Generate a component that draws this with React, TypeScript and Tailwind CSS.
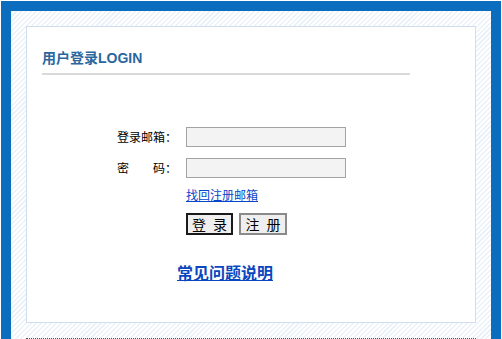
export default function App() {
  const cjk = { fontFamily: '"Noto Sans CJK SC", "Liberation Sans", sans-serif' };
  return (
    <div className="w-[502px] h-[339px] bg-white pt-px px-px overflow-hidden">
      <div className="h-[338px] bg-[#0a6dbd] pt-[10px] px-[10px]">
        <div className="h-[328px] bg-[repeating-linear-gradient(135deg,#ebf2fa_0px,#ebf2fa_1.5px,#ffffff_1.5px,#ffffff_3.5px)] pt-[15px] px-[15px]">
          <div className="h-[297px] bg-white border border-[#d3deec]">
            <div className="ml-[15px] mt-[21px] w-[368px] border-b-2 border-[#d9d9d9] pb-[5px]">
              <div
                className="text-[14px] leading-[20px] font-bold text-[#2a679e]"
                style={{ fontFamily: '"Liberation Sans", "Noto Sans CJK SC", sans-serif' }}
              >
                用户登录LOGIN
              </div>
            </div>

            <div className="ml-[90px] mt-[52px] text-[12px] text-black" style={cjk}>
              <div className="flex items-center h-[20px]">
                <span className="w-[69px] leading-[20px]">登录邮箱：</span>
                <input className="w-[160px] h-[20px] bg-[#f3f3f3] border border-[#a3a3a3] outline-none" />
              </div>
              <div className="flex items-center h-[20px] mt-[11px]">
                <span className="w-[69px] leading-[20px]">密　　码：</span>
                <input type="password" className="w-[160px] h-[20px] bg-[#f3f3f3] border border-[#a3a3a3] outline-none" />
              </div>
              <div className="ml-[69px] mt-[10px] h-[14px] leading-[14px]">
                <a href="#" className="text-[#0645c8] underline">找回注册邮箱</a>
              </div>
              <div className="ml-[69px] mt-[11px] flex gap-[6px]">
                <button className="w-[47px] h-[22px] bg-[#efefef] border-2 border-[#1a1a1a] text-[14px] leading-[18px] tracking-[2px] pl-[2px] text-black">
                  登 录
                </button>
                <button className="w-[48px] h-[22px] bg-[#efefef] border-2 border-[#8a8a8a] text-[14px] leading-[18px] tracking-[2px] pl-[2px] text-black">
                  注 册
                </button>
              </div>
              <div className="ml-[60px] mt-[27px] leading-[20px]">
                <a href="#" className="text-[16px] font-bold text-[#0a46c0] underline">常见问题说明</a>
              </div>
            </div>
          </div>
          <div className="mt-[15px] border-t border-dotted border-[#555]"></div>
        </div>
      </div>
    </div>
  );
}
